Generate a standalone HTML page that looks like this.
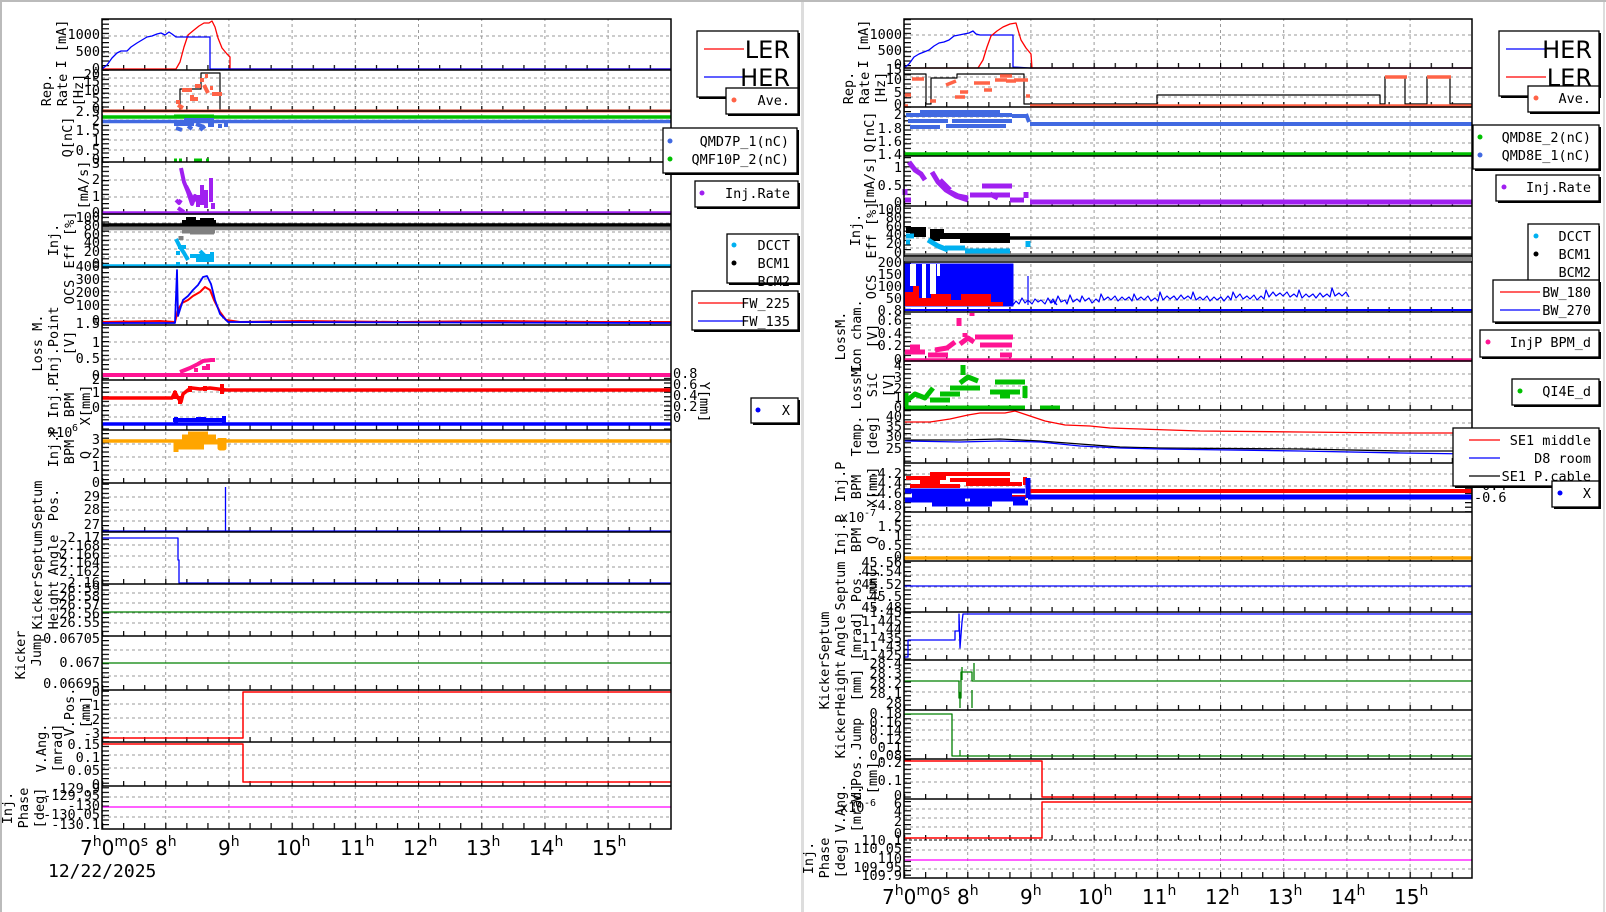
<!DOCTYPE html>
<html><head><meta charset="utf-8"><style>
html,body{margin:0;padding:0;background:#fff;width:1606px;height:912px;overflow:hidden}
svg{display:block}
.t{font-family:"DejaVu Sans Mono","Liberation Mono",monospace;font-size:13.5px;fill:#000}
.r{text-anchor:end}
.m{text-anchor:middle}
.h{font-family:"DejaVu Sans","Liberation Sans",sans-serif;font-size:20px;fill:#000}
.lg{font-family:"DejaVu Sans Mono","Liberation Mono",monospace;font-size:13.5px;fill:#000;text-anchor:end}
.big{font-family:"DejaVu Sans","Liberation Sans",sans-serif;font-size:24px;fill:#000;text-anchor:end}
</style></head><body>
<svg width="1606" height="912" viewBox="0 0 1606 912" xmlns="http://www.w3.org/2000/svg">
<defs>
<pattern id="vgL" x="165.2" y="0" width="63.2" height="6" patternUnits="userSpaceOnUse"><rect x="0" y="0" width="1" height="3" fill="#999"/></pattern>
<pattern id="vgR" x="967.2" y="0" width="63.2" height="6" patternUnits="userSpaceOnUse"><rect x="0" y="0" width="1" height="3" fill="#999"/></pattern>
<pattern id="txL" x="102" y="0" width="21.067" height="912" patternUnits="userSpaceOnUse"><rect x="0" y="0" width="1.2" height="912" fill="#000"/></pattern>
<pattern id="txR" x="904" y="0" width="21.067" height="912" patternUnits="userSpaceOnUse"><rect x="0" y="0" width="1.2" height="912" fill="#000"/></pattern>
<pattern id="ty" x="0" y="19" width="10" height="4.6" patternUnits="userSpaceOnUse"><rect x="0" y="0" width="10" height="1.2" fill="#000"/></pattern>
</defs>
<rect x="0" y="0" width="1606" height="2" fill="#bbb"/>
<rect x="0" y="0" width="2" height="912" fill="#bbb"/>
<rect x="801" y="2" width="3" height="910" fill="#ddd"/>
<rect x="1603" y="2" width="2" height="910" fill="#ddd"/>

<!-- ================= LEFT ================= -->
<rect x="102" y="19" width="569" height="810" fill="url(#vgL)"/>
<path stroke="#999" stroke-dasharray="3 3" stroke-width="1" fill="none" d="M102 36H671M102 53H671M102 78H671M102 86H671M102 94H671M102 102H671M102 120H671M102 130H671M102 140H671M102 150H671M102 180H671M102 197H671M102 223H671M102 232H671M102 240H671M102 249H671M102 257H671M102 279H671M102 292H671M102 305H671M102 318H671M102 342H671M102 359H671M102 392H671M102 405H671M102 417H671M102 444H671M102 457H671M102 470H671M102 497H671M102 510H671M102 521H671M102 545H671M102 556H671M102 567H671M102 593H671M102 603H671M102 613H671M102 623H671M102 650H671M102 663H671M102 676H671M102 704H671M102 718H671M102 732H671M102 755H671M102 768H671M102 797H671M102 807H671M102 817H671"/>
<g fill="url(#txL)">
<rect x="102" y="65" width="569" height="5"/><rect x="102" y="106" width="569" height="5"/><rect x="102" y="157" width="569" height="5"/><rect x="102" y="209" width="569" height="5"/><rect x="102" y="262" width="569" height="5"/><rect x="102" y="320" width="569" height="5"/><rect x="102" y="375" width="569" height="5"/><rect x="102" y="425" width="569" height="5"/><rect x="102" y="478" width="569" height="5"/><rect x="102" y="527" width="569" height="5"/><rect x="102" y="579" width="569" height="5"/><rect x="102" y="631" width="569" height="5"/><rect x="102" y="685" width="569" height="5"/><rect x="102" y="737" width="569" height="5"/><rect x="102" y="781" width="569" height="5"/><rect x="102" y="823" width="569" height="6"/>
</g>
<rect x="102" y="19" width="7" height="810" fill="url(#ty)"/>
<rect x="664" y="376" width="7" height="54" fill="url(#ty)"/>

<g fill="none" stroke-linejoin="round">
<polyline stroke="#f00" stroke-width="1.3" points="102,69 176,69 180,62 184,47 188,35 194,30 199,26 204,23 209,23 212,21 215,27 218,38 222,48 227,54 230,57 230,69 671,69"/>
<polyline stroke="#00f" stroke-width="1.3" points="102,69 107,65 112,58 117,53 121,51 127,51 131,47 137,43 142,40 147,37 152,36 157,34 161,33 165,35 169,32 172,34 176,37 210,37 210,69 671,69"/>
<polyline stroke="#000" stroke-width="1.2" points="102,110 180,110 180,89 201,89 201,73 220,73 220,110 671,110"/>
<line x1="102" y1="111" x2="671" y2="111" stroke="#ff6347" stroke-width="3"/>
<path stroke="#ff6347" stroke-width="4" d="M178 105l5 3M182 90h10M190 99h8M195 86h6M200 80h4M205 76h3M210 88h3M212 94h10M190 97l4 0M204 85l4 8M176 102h4"/>
<line x1="102" y1="117" x2="671" y2="117" stroke="#00c000" stroke-width="3.5"/>
<line x1="102" y1="121.5" x2="671" y2="121.5" stroke="#4169e1" stroke-width="3.5"/>
<path stroke="#4169e1" stroke-width="4" d="M174 124h20M176 128l6 2M188 126l4 3M196 124l8 3M200 130l5-4M208 125h6M220 124v4M226 121v6M184 120h30"/>
<path stroke="#00c000" stroke-width="3" d="M174 160h3M179 160h3M194 160h8M206 160h3M174 116h40"/>
<line x1="102" y1="213" x2="671" y2="213" stroke="#a020f0" stroke-width="3.5"/>
<path stroke="#a020f0" stroke-width="4" d="M181 168l3 14 4 10 4 12 3-8 3 6M202 185v20M198 195v12M206 190v18M211 178v24M213 203v6M176 200l3 3 2-3M186 186l8 16M178 208l6 4"/>
<line x1="102" y1="225" x2="671" y2="225" stroke="#000" stroke-width="3.5"/>
<line x1="102" y1="228.5" x2="671" y2="228.5" stroke="#808080" stroke-width="3.5"/>
<path stroke="#000" stroke-width="4" d="M182 222h34M186 219h10M200 220h14"/>
<path stroke="#808080" stroke-width="5" d="M182 231h33M181 236v4M190 232h24"/>
<line x1="102" y1="266" x2="671" y2="266" stroke="#00b0f0" stroke-width="3.5"/>
<path stroke="#00b0f0" stroke-width="4" d="M176 239l4 8 4 6 4 7M178 247h8M176 253l4 0M190 256h20M196 260h18M200 251l6 6M212 252v8M176 264h4"/>
<polyline stroke="#f00" stroke-width="2" points="102,322 160,321 175,322 178,310 182,303 188,300 193,296 200,292 205,287 210,290 214,300 220,312 226,320 240,322 300,321 400,322 500,321 600,322 671,322"/>
<polyline stroke="#00f" stroke-width="1.8" points="102,323 175,323 177,270 178,316 183,300 188,296 193,290 198,285 203,277 207,276 211,284 215,300 220,314 228,322 671,323"/>
<line x1="102" y1="375" x2="671" y2="375" stroke="#ff1493" stroke-width="4"/>
<path stroke="#ff1493" stroke-width="4" d="M180 372l10-4 8-4 5-3 8-1h4M196 368v4M204 366v4M208 364v6"/>
<polyline stroke="#f00" stroke-width="3.5" points="102,398 172,398 175,392 178,398 181,402 183,394 188,390 192,388 200,389 210,388 218,389 226,390 671,390"/>
<path stroke="#f00" stroke-width="4" d="M175 391v8M180 396v8M190 386v6M205 386v5M222 384v10"/>
<line x1="102" y1="424" x2="671" y2="424" stroke="#00f" stroke-width="3.5"/>
<path stroke="#00f" stroke-width="4" d="M173 420h50M176 417v6M196 419h10M224 416v8"/>
<line x1="102" y1="441" x2="671" y2="441" stroke="#ffa500" stroke-width="3.5"/>
<path stroke="#ffa500" stroke-width="5" d="M174 442h46M174 447h30M176 452v-10M182 437h34M188 434h20M220 438v10h4v-10"/>
<line x1="102" y1="531" x2="671" y2="531" stroke="#00f" stroke-width="1.3"/>
<line x1="225.5" y1="531" x2="225.5" y2="487" stroke="#00f" stroke-width="1.3"/>
<polyline stroke="#00f" stroke-width="1.3" points="102,538 178,538 178,560 179,560 179,583 671,583"/>
<line x1="102" y1="612" x2="671" y2="612" stroke="#008000" stroke-width="1.3"/>
<line x1="102" y1="663" x2="671" y2="663" stroke="#008000" stroke-width="1.3"/>
<polyline stroke="#f00" stroke-width="1.5" points="102,738 243,738 243,692 671,692"/>
<polyline stroke="#f00" stroke-width="1.5" points="102,744 243,744 243,782 671,782"/>
<line x1="102" y1="807" x2="671" y2="807" stroke="#f0f" stroke-width="1.3"/>
</g>
<g stroke="#000" stroke-width="1.5" fill="none">
<rect x="102" y="19" width="569" height="810"/>
<path d="M102 70H671M102 111H671M102 162H671M102 214H671M102 267H671M102 325H671M102 380H671M102 430H671M102 483H671M102 532H671M102 584H671M102 636H671M102 690H671M102 742H671M102 786H671"/>
</g>

<g class="t r">
<text x="100" y="39">1000</text><text x="100" y="56">500</text><text x="100" y="73">0</text>
<text x="100" y="79">20</text><text x="100" y="86">15</text><text x="100" y="95">10</text><text x="100" y="103">5</text><text x="100" y="113">0</text>
<text x="100" y="116">2.5</text><text x="100" y="125">2</text><text x="100" y="135">1.5</text><text x="100" y="145">1</text><text x="100" y="155">0.5</text><text x="100" y="164">0</text>
<text x="100" y="168">3</text><text x="100" y="184">2</text><text x="100" y="201">1</text><text x="100" y="217">0</text>
<text x="100" y="222">100</text><text x="100" y="230">80</text><text x="100" y="239">60</text><text x="100" y="247">40</text><text x="100" y="256">20</text><text x="100" y="268">0</text>
<text x="100" y="271">400</text><text x="100" y="284">300</text><text x="100" y="297">200</text><text x="100" y="310">100</text><text x="100" y="325">0</text>
<text x="100" y="328">1.5</text><text x="100" y="347">1</text><text x="100" y="363">0.5</text><text x="100" y="380">0</text>
<text x="100" y="384">2</text><text x="100" y="397">1</text><text x="100" y="412">0</text>
<text x="100" y="444">3</text><text x="100" y="458">2</text><text x="100" y="471">1</text><text x="100" y="487">0</text>
<text x="100" y="501">29</text><text x="100" y="514">28</text><text x="100" y="529">27</text>
<text x="100" y="542">2.17</text><text x="100" y="550">2.168</text><text x="100" y="559">2.166</text><text x="100" y="567">2.164</text><text x="100" y="576">2.162</text><text x="100" y="587">2.16</text>
<text x="100" y="593">26.59</text><text x="100" y="601">26.58</text><text x="100" y="609">26.57</text><text x="100" y="618">26.56</text><text x="100" y="627">26.55</text>
<text x="100" y="643">0.06705</text><text x="100" y="667">0.067</text><text x="100" y="688">0.06695</text>
<text x="100" y="696">0</text><text x="100" y="710">-1</text><text x="100" y="724">-2</text><text x="100" y="738">-3</text>
<text x="100" y="749">0.15</text><text x="100" y="762">0.1</text><text x="100" y="775">0.05</text><text x="100" y="789">0</text>
<text x="100" y="793">-129.9</text><text x="100" y="800">-129.95</text><text x="100" y="810">-130</text><text x="100" y="819">-130.05</text><text x="100" y="829">-130.1</text>
</g>
<g class="t"><text x="48" y="437">x10</text><text x="72" y="431" style="font-size:10px">6</text>
<text x="673" y="378">0.8</text><text x="673" y="389">0.6</text><text x="673" y="400">0.4</text><text x="673" y="411">0.2</text><text x="673" y="422">0</text>
<text transform="translate(700,402) rotate(90)" class="m">Y[mm]</text></g>
<g class="t m">
<text transform="translate(66,44) rotate(-90)">I [mA]</text>
<text transform="translate(51,90) rotate(-90)">Rep.</text><text transform="translate(67,90) rotate(-90)">Rate</text><text transform="translate(83,90) rotate(-90)">[Hz]</text>
<text transform="translate(72,137) rotate(-90)">Q[nC]</text>
<text transform="translate(88,185) rotate(-90)">[mA/s]</text>
<text transform="translate(58,240) rotate(-90)">Inj.</text><text transform="translate(74,240) rotate(-90)">Eff [%]</text>
<text transform="translate(74,292) rotate(-90)">OCS</text>
<text transform="translate(42,343) rotate(-90)">Loss M.</text><text transform="translate(58,343) rotate(-90)">Inj.Point</text><text transform="translate(74,343) rotate(-90)">[V]</text>
<text transform="translate(58,398) rotate(-90)">Inj.P</text><text transform="translate(74,405) rotate(-90)">BPM</text><text transform="translate(90,405) rotate(-90)">X[mm]</text>
<text transform="translate(58,447) rotate(-90)">Inj.P</text><text transform="translate(74,452) rotate(-90)">BPM</text><text transform="translate(90,455) rotate(-90)">Q</text>
<text transform="translate(42,505) rotate(-90)">Septum</text><text transform="translate(58,505) rotate(-90)">Pos.</text>
<text transform="translate(42,555) rotate(-90)">Septum</text><text transform="translate(58,555) rotate(-90)">Angle</text>
<text transform="translate(42,605) rotate(-90)">Kicker</text><text transform="translate(58,605) rotate(-90)">Height</text>
<text transform="translate(25,655) rotate(-90)">Kicker</text><text transform="translate(41,650) rotate(-90)">Jump</text>
<text transform="translate(74,712) rotate(-90)">V.Pos.</text><text transform="translate(90,712) rotate(-90)">[mm]</text>
<text transform="translate(46,748) rotate(-90)">V.Ang.</text><text transform="translate(62,748) rotate(-90)">[mrad]</text>
<text transform="translate(12,808) rotate(-90)">Inj.</text><text transform="translate(28,808) rotate(-90)">Phase</text><text transform="translate(44,808) rotate(-90)">[deg]</text>
</g>
<g class="h">
<text x="80" y="855">7<tspan dy="-9" font-size="14">h</tspan><tspan dy="9">0</tspan><tspan dy="-9" font-size="14">m</tspan><tspan dy="9">0</tspan><tspan dy="-9" font-size="14">s</tspan></text>
<text x="155" y="855">8<tspan dy="-9" font-size="14">h</tspan></text>
<text x="218" y="855">9<tspan dy="-9" font-size="14">h</tspan></text>
<text x="276" y="855">10<tspan dy="-9" font-size="14">h</tspan></text>
<text x="340" y="855">11<tspan dy="-9" font-size="14">h</tspan></text>
<text x="403" y="855">12<tspan dy="-9" font-size="14">h</tspan></text>
<text x="466" y="855">13<tspan dy="-9" font-size="14">h</tspan></text>
<text x="529" y="855">14<tspan dy="-9" font-size="14">h</tspan></text>
<text x="592" y="855">15<tspan dy="-9" font-size="14">h</tspan></text>
<text x="48" y="877" style="font-family:'DejaVu Sans Mono',monospace;font-size:18px">12/22/2025</text>
</g>

<g stroke="#000" fill="#fff" stroke-width="1.3">
<rect x="699" y="33" width="101" height="66" fill="#000" stroke="none"/><rect x="697" y="31" width="101" height="66"/>
<rect x="728" y="90" width="72" height="26" fill="#000" stroke="none"/><rect x="726" y="88" width="72" height="26"/>
<rect x="665" y="130" width="134" height="45" fill="#000" stroke="none"/><rect x="663" y="128" width="134" height="45"/>
<rect x="697" y="183" width="103" height="26" fill="#000" stroke="none"/><rect x="695" y="181" width="103" height="26"/>
<rect x="729" y="236" width="71" height="49" fill="#000" stroke="none"/><rect x="727" y="234" width="71" height="49"/>
<rect x="694" y="293" width="106" height="39" fill="#000" stroke="none"/><rect x="692" y="291" width="106" height="39"/>
<rect x="753" y="400" width="47" height="25" fill="#000" stroke="none"/><rect x="751" y="398" width="47" height="25"/>
</g>
<line x1="704" y1="49" x2="744" y2="49" stroke="#f00" stroke-width="1.2"/><text class="big" x="790" y="58">LER</text>
<line x1="704" y1="77" x2="744" y2="77" stroke="#00f" stroke-width="1.2"/><text class="big" x="790" y="86">HER</text>
<circle cx="734" cy="100" r="2.5" fill="#ff6347"/><text class="lg" x="790" y="105">Ave.</text>
<circle cx="670" cy="141" r="2.5" fill="#4169e1"/><text class="lg" x="789" y="146">QMD7P_1(nC)</text>
<circle cx="670" cy="159" r="2.5" fill="#00c000"/><text class="lg" x="789" y="164">QMF10P_2(nC)</text>
<circle cx="702" cy="193" r="2.5" fill="#a020f0"/><text class="lg" x="790" y="198">Inj.Rate</text>
<circle cx="734" cy="245" r="2.5" fill="#00b0f0"/><text class="lg" x="790" y="250">DCCT</text>
<circle cx="734" cy="263" r="2.5" fill="#000"/><text class="lg" x="790" y="268">BCM1</text>
<text class="lg" x="790" y="286">BCM2</text>
<line x1="698" y1="303" x2="746" y2="303" stroke="#f00" stroke-width="1.2"/><text class="lg" x="790" y="308">FW_225</text>
<line x1="698" y1="321" x2="746" y2="321" stroke="#00f" stroke-width="1.2"/><text class="lg" x="790" y="326">FW_135</text>
<circle cx="758" cy="410" r="2.5" fill="#00f"/><text class="lg" x="790" y="415">X</text>

<!-- ================= RIGHT ================= -->
<rect x="904" y="19" width="568" height="859" fill="url(#vgR)"/>
<path stroke="#999" stroke-dasharray="3 3" stroke-width="1" fill="none" d="M904 35H1472M904 51H1472M904 77H1472M904 87H1472M904 97H1472M904 117H1472M904 130H1472M904 143H1472M904 168H1472M904 186H1472M904 218H1472M904 228H1472M904 238H1472M904 248H1472M904 275H1472M904 288H1472M904 300H1472M904 325H1472M904 338H1472M904 350H1472M904 374H1472M904 386H1472M904 398H1472M904 423H1472M904 435H1472M904 448H1472M904 474H1472M904 486H1472M904 498H1472M904 525H1472M904 537H1472M904 549H1472M904 575H1472M904 587H1472M904 599H1472M904 622H1472M904 631H1472M904 640H1472M904 649H1472M904 670H1472M904 681H1472M904 692H1472M904 720H1472M904 730H1472M904 740H1472M904 769H1472M904 782H1472M904 809H1472M904 818H1472M904 827H1472M904 850H1472M904 860H1472M904 869H1472"/>
<g fill="url(#txR)">
<rect x="904" y="63" width="568" height="5"/><rect x="904" y="102" width="568" height="5"/><rect x="904" y="151" width="568" height="5"/><rect x="904" y="201" width="568" height="5"/><rect x="904" y="251" width="568" height="5"/><rect x="904" y="307" width="568" height="5"/><rect x="904" y="356" width="568" height="5"/><rect x="904" y="405" width="568" height="5"/><rect x="904" y="458" width="568" height="5"/><rect x="904" y="507" width="568" height="5"/><rect x="904" y="556" width="568" height="5"/><rect x="904" y="607" width="568" height="5"/><rect x="904" y="655" width="568" height="5"/><rect x="904" y="705" width="568" height="5"/><rect x="904" y="754" width="568" height="5"/><rect x="904" y="794" width="568" height="5"/><rect x="904" y="835" width="568" height="5"/><rect x="904" y="872" width="568" height="6"/>
</g>
<rect x="904" y="19" width="7" height="859" fill="url(#ty)"/>
<rect x="1465" y="463" width="7" height="49" fill="url(#ty)"/>

<g fill="none" stroke-linejoin="round">
<polyline stroke="#00f" stroke-width="1.3" points="904,68 909,64 914,57 919,54 924,52 929,50 934,46 939,43 944,42 949,40 954,36 959,35 964,34 969,33 973,31 976,34 980,35 1013,35 1013,67 1030,68 1472,68"/>
<polyline stroke="#f00" stroke-width="1.3" points="904,68 978,68 983,60 987,47 991,36 997,31 1003,27 1010,24 1016,23 1018,30 1021,40 1026,48 1031,54 1032,68 1472,68"/>
<polyline stroke="#000" stroke-width="1.2" points="904,74 926,74 926,104 931,104 931,78 957,78 957,74 1024,74 1024,104 1157,104 1157,95 1380,95 1380,104 1385,104 1385,77 1405,77 1405,104 1427,104 1427,77 1450,77 1450,104 1472,104"/>
<line x1="1030" y1="106" x2="1472" y2="106" stroke="#ff6347" stroke-width="3.5"/>
<path stroke="#ff6347" stroke-width="3.5" d="M1385 77h22M1427 77h24M904 106h4M905 95h6M912 79h12M930 101h6M946 85l10-4M960 92h8M974 83h16M984 90h8M995 80h12M1000 76h12M1006 81h10M1014 80h14M955 97h10M1026 96h4"/>
<path stroke="#4169e1" stroke-width="4" d="M906 115h106M908 121h40M952 121h60M910 127h30M946 126h60M920 112h80M1012 116h14M1026 114l3 8M1030 124h442"/>
<line x1="904" y1="154" x2="1472" y2="154" stroke="#00c000" stroke-width="3.5"/>
<path stroke="#a020f0" stroke-width="5" d="M909 162l6 8 6 4 4 6M905 189v6M905 200h6M932 172l6 10 8 8 10 6 12 4M940 180l10 10M950 192l8 4 10 2M970 195h40M982 186h30M990 194l8 4M1010 200h14M1026 192v6M1030 202h442"/>
<line x1="904" y1="255" x2="1472" y2="255" stroke="#808080" stroke-width="3.5"/>
<line x1="1010" y1="238" x2="1472" y2="238" stroke="#000" stroke-width="3.5"/>
<path stroke="#000" stroke-width="6" d="M906 230h20M910 234h16M930 232h14M940 236h70M960 240h50M930 238h10"/>
<path stroke="#00b0f0" stroke-width="5" d="M906 236h8M906 242h4M928 240l10 6 10 4M945 248h20M965 251h45M1028 241v6"/>
<path stroke="#00f" stroke-width="1" fill="#00f" d="M905 264H1013V306H905Z"/>
<path fill="#fff" stroke="none" d="M910 264h6v22h-6zM922 264h4v40h-4zM930 264h6v30h-6zM937 264h3v12h-3z"/>
<path fill="#f00" d="M905 292h8v-6h6v12h12v-4h20v6h10v-6h30v8h12V306H905Z"/>
<path stroke="#00f" stroke-width="1.2" d="M1013 305l3-4 3 3 3-6 3 5 3-3 4 4 3-5 3 3 3-2 4 4 3-6 3 5 3-2 3 4M1028 305V276M1050 303l3-4 2 5 3-8 3 6 4-2 2 4 3-9 3 7 4-3 3 3 2-6 3 5 4-3 3 5 4-4 3 3 2-8 3 6 4-3 3 3 4-4 3 5 4-4 3 3 4-3 3 4 2-7 3 6 4-3 3 3 4-4 3 5 4-3 3 3 2-9 3 8 4-4 3 3 4-3 3 4 4-5 3 4 4-3 3 3 2-7 3 8 4-3 3 3 4-4 3 5 4-4 3 3 4-3 3 4 4-5 3 4 2-8 3 6 4-4 3 5 4-3 3 3 4-4 3 5 4-4 3 3 2-9 3 7 4-5 3 4 4-3 3 3 4-4 3 5 4-3 3 3 2-7 3 8 4-4 3 3 4-3 3 4 4-5 3 4 4-3 3 3 2-9 3 8 4-3 3 3 4-4 3 5"/>
<line x1="904" y1="310" x2="1472" y2="310" stroke="#00f" stroke-width="2"/>
<line x1="904" y1="360" x2="1472" y2="360" stroke="#ff1493" stroke-width="3.5"/>
<path stroke="#ff1493" stroke-width="5" d="M905 352h20M910 347h10M928 355h20M935 350l12 -2 8-6M960 344l8-6 6 4M975 337h38M980 345h32M959 318v8M972 313v3M965 333v4M1000 355h12"/>
<path stroke="#00c000" stroke-width="5" d="M905 402l10-8 10 4 8-10M906 393v14M930 400h20M940 394h20M950 388h30M960 383l8-6 10 4M963 375v-10M990 392h30M995 382h30M1000 396h10M1025 398v-12M905 408h120M1040 408h20"/>
<polyline stroke="#f00" stroke-width="1.3" points="905,422 930,422 950,419 968,415 980,413 1005,413 1015,411 1030,416 1045,421 1065,425 1090,426 1110,428 1140,429 1200,431 1300,432 1400,433 1472,433"/>
<polyline stroke="#000" stroke-width="1.3" points="905,440 960,440 1000,439 1040,441 1080,444 1120,447 1160,448 1300,449 1400,451 1472,451"/>
<polyline stroke="#00f" stroke-width="1.3" points="905,441 960,442 1000,441 1040,442 1080,446 1120,448 1160,449 1300,451 1400,453 1472,454"/>
<path stroke="#f00" stroke-width="4" d="M906 478h40M950 480h60M910 486h50M966 484h56M920 482h20M930 474h80M1030 491h442M1008 497h18M1025 477v8"/>
<path stroke="#00f" stroke-width="5" d="M905 491h120M905 500h60M970 499h55M912 496h100M1013 503h15M1028 497h444M1028 478v20M932 504h60"/>
<line x1="904" y1="558" x2="1472" y2="558" stroke="#ffa500" stroke-width="3.5"/>
<line x1="904" y1="586" x2="1472" y2="586" stroke="#00f" stroke-width="1.3"/>
<polyline stroke="#00f" stroke-width="1.3" points="904,657 908,657 908,640 955,640 955,631 959,631 959,614 960,648 962,622 963,614 1472,614"/>
<polyline stroke="#008000" stroke-width="1.3" points="904,681 959,681 959,698 961,698 961,672 972,672 972,681 1472,681"/>
<path stroke="#008000" stroke-width="1.3" d="M960 708V692M962 667V680M972 708V690M974 663V680"/>
<polyline stroke="#008000" stroke-width="1.3" points="904,714 952,714 952,756 1472,756"/>
<line x1="960" y1="756" x2="960" y2="750" stroke="#008000" stroke-width="1.2"/>
<polyline stroke="#f00" stroke-width="1.5" points="904,761 1042,761 1042,797 1472,797"/>
<polyline stroke="#f00" stroke-width="1.5" points="904,838 1042,838 1042,802 1472,802"/>
<line x1="904" y1="840" x2="1472" y2="840" stroke="#000" stroke-width="1" stroke-dasharray="3 2"/>
<line x1="904" y1="860" x2="1472" y2="860" stroke="#f0f" stroke-width="1.3"/>
</g>
<g stroke="#000" stroke-width="1.5" fill="none">
<rect x="904" y="19" width="568" height="859"/>
<path d="M904 68H1472M904 107H1472M904 156H1472M904 206H1472M904 256H1472M904 262H1472M904 312H1472M904 361H1472M904 410H1472M904 463H1472M904 512H1472M904 561H1472M904 612H1472M904 660H1472M904 710H1472M904 759H1472M904 799H1472"/>
</g>
<rect x="904" y="257" width="568" height="4" fill="#808080"/>

<g class="t r">
<text x="902" y="39">1000</text><text x="902" y="55">500</text><text x="902" y="69">0</text><text x="902" y="74">15</text>
<text x="902" y="84">10</text><text x="902" y="97">5</text><text x="902" y="109">0</text>
<text x="902" y="119">2</text><text x="902" y="133">1.8</text><text x="902" y="146">1.6</text><text x="902" y="159">1.4</text>
<text x="902" y="172">1</text><text x="902" y="190">0.5</text><text x="902" y="207">0</text>
<text x="902" y="214">100</text><text x="902" y="222">80</text><text x="902" y="231">60</text><text x="902" y="239">40</text><text x="902" y="248">20</text><text x="902" y="257">0</text>
<text x="902" y="267">200</text><text x="902" y="279">150</text><text x="902" y="291">100</text><text x="902" y="303">50</text><text x="902" y="315">0.8</text>
<text x="902" y="325">0.6</text><text x="902" y="338">0.4</text><text x="902" y="350">0.2</text><text x="902" y="364">0</text>
<text x="902" y="370">4</text><text x="902" y="382">3</text><text x="902" y="393">2</text><text x="902" y="402">1</text><text x="902" y="412">0</text>
<text x="902" y="421">40</text><text x="902" y="431">35</text><text x="902" y="441">30</text><text x="902" y="453">25</text>
<text x="902" y="478">-4.2</text><text x="902" y="488">-4.4</text><text x="902" y="498">-4.6</text><text x="902" y="510">-4.8</text>
<text x="902" y="521">2</text><text x="902" y="531">1.5</text><text x="902" y="541">1</text><text x="902" y="550">0.5</text><text x="902" y="561">0</text>
<text x="902" y="567">45.56</text><text x="902" y="576">45.54</text><text x="902" y="589">45.52</text><text x="902" y="601">45.5</text><text x="902" y="612">45.48</text>
<text x="902" y="617">1.45</text><text x="902" y="626">1.445</text><text x="902" y="634">1.44</text><text x="902" y="643">1.435</text><text x="902" y="651">1.43</text><text x="902" y="660">1.425</text>
<text x="902" y="668">28.4</text><text x="902" y="678">28.3</text><text x="902" y="688">28.2</text><text x="902" y="698">28.1</text><text x="902" y="708">28</text>
<text x="902" y="718">0.18</text><text x="902" y="727">0.16</text><text x="902" y="735">0.14</text><text x="902" y="744">0.12</text><text x="902" y="752">0.1</text><text x="902" y="760">0.08</text>
<text x="902" y="767">0.2</text><text x="902" y="785">0.1</text><text x="902" y="800">0</text>
<text x="902" y="808">6</text><text x="902" y="816">4</text><text x="902" y="826">2</text><text x="902" y="838">0</text>
<text x="902" y="845">110.1</text><text x="902" y="853">110.05</text><text x="902" y="863">110</text><text x="902" y="872">109.95</text><text x="902" y="880">109.9</text>
</g>
<g class="t"><text x="1474" y="466">0</text><text x="1474" y="478">-0.2</text><text x="1474" y="490">-0.4</text><text x="1474" y="502">-0.6</text>
<text x="840" y="522">x10</text><text x="864" y="516" style="font-size:10px">-7</text><text x="840" y="812">x10</text><text x="864" y="806" style="font-size:10px">-6</text></g>
<g class="t m">
<text transform="translate(868,44) rotate(-90)">I [mA]</text>
<text transform="translate(853,88) rotate(-90)">Rep.</text><text transform="translate(869,88) rotate(-90)">Rate</text><text transform="translate(885,88) rotate(-90)">[Hz]</text>
<text transform="translate(874,132) rotate(-90)">Q[nC]</text>
<text transform="translate(874,181) rotate(-90)">[mA/s]</text>
<text transform="translate(860,230) rotate(-90)">Inj.</text><text transform="translate(876,230) rotate(-90)">Eff [%]</text>
<text transform="translate(876,287) rotate(-90)">OCS</text>
<text transform="translate(845,336) rotate(-90)">LossM.</text><text transform="translate(861,336) rotate(-90)">Ion cham.</text><text transform="translate(877,336) rotate(-90)">[V]</text>
<text transform="translate(861,385) rotate(-90)">LossM.</text><text transform="translate(877,385) rotate(-90)">SiC</text><text transform="translate(893,385) rotate(-90)">[V]</text>
<text transform="translate(861,436) rotate(-90)">Temp.</text><text transform="translate(877,436) rotate(-90)">[deg]</text>
<text transform="translate(845,482) rotate(-90)">Inj.P</text><text transform="translate(861,487) rotate(-90)">BPM</text><text transform="translate(877,487) rotate(-90)">X[mm]</text>
<text transform="translate(845,535) rotate(-90)">Inj.P</text><text transform="translate(861,540) rotate(-90)">BPM</text><text transform="translate(877,540) rotate(-90)">Q</text>
<text transform="translate(845,586) rotate(-90)">Septum</text><text transform="translate(861,586) rotate(-90)">Pos.</text><text transform="translate(877,586) rotate(-90)">[mm]</text>
<text transform="translate(829,636) rotate(-90)">Septum</text><text transform="translate(845,636) rotate(-90)">Angle</text><text transform="translate(861,636) rotate(-90)">[mrad]</text>
<text transform="translate(829,685) rotate(-90)">Kicker</text><text transform="translate(845,685) rotate(-90)">Height</text><text transform="translate(861,685) rotate(-90)">[mm]</text>
<text transform="translate(845,734) rotate(-90)">Kicker</text><text transform="translate(861,734) rotate(-90)">Jump</text>
<text transform="translate(861,778) rotate(-90)">V.Pos.</text><text transform="translate(877,778) rotate(-90)">[mm]</text>
<text transform="translate(845,808) rotate(-90)">V.Ang.</text><text transform="translate(861,808) rotate(-90)">[mrad]</text>
<text transform="translate(813,858) rotate(-90)">Inj.</text><text transform="translate(829,858) rotate(-90)">Phase</text><text transform="translate(845,858) rotate(-90)">[deg]</text>
</g>
<g class="h">
<text x="882" y="904">7<tspan dy="-9" font-size="14">h</tspan><tspan dy="9">0</tspan><tspan dy="-9" font-size="14">m</tspan><tspan dy="9">0</tspan><tspan dy="-9" font-size="14">s</tspan></text>
<text x="957" y="904">8<tspan dy="-9" font-size="14">h</tspan></text>
<text x="1020" y="904">9<tspan dy="-9" font-size="14">h</tspan></text>
<text x="1078" y="904">10<tspan dy="-9" font-size="14">h</tspan></text>
<text x="1142" y="904">11<tspan dy="-9" font-size="14">h</tspan></text>
<text x="1205" y="904">12<tspan dy="-9" font-size="14">h</tspan></text>
<text x="1268" y="904">13<tspan dy="-9" font-size="14">h</tspan></text>
<text x="1331" y="904">14<tspan dy="-9" font-size="14">h</tspan></text>
<text x="1394" y="904">15<tspan dy="-9" font-size="14">h</tspan></text>
</g>

<g stroke="#000" fill="#fff" stroke-width="1.3">
<rect x="1501" y="33" width="100" height="65" fill="#000" stroke="none"/><rect x="1499" y="31" width="100" height="65"/>
<rect x="1530" y="88" width="70" height="26" fill="#000" stroke="none"/><rect x="1528" y="86" width="71" height="26"/>
<rect x="1475" y="127" width="126" height="44" fill="#000" stroke="none"/><rect x="1473" y="125" width="126" height="44"/>
<rect x="1498" y="177" width="103" height="26" fill="#000" stroke="none"/><rect x="1496" y="175" width="103" height="26"/>
<rect x="1530" y="226" width="70" height="62" fill="#000" stroke="none"/><rect x="1528" y="224" width="71" height="62"/>
<rect x="1495" y="282" width="106" height="42" fill="#000" stroke="none"/><rect x="1493" y="280" width="106" height="42"/>
<rect x="1482" y="332" width="119" height="27" fill="#000" stroke="none"/><rect x="1480" y="330" width="119" height="27"/>
<rect x="1514" y="381" width="87" height="26" fill="#000" stroke="none"/><rect x="1512" y="379" width="87" height="26"/>
<rect x="1455" y="430" width="146" height="58" fill="#000" stroke="none"/><rect x="1453" y="428" width="146" height="58"/>
<rect x="1554" y="483" width="47" height="26" fill="#000" stroke="none"/><rect x="1552" y="481" width="47" height="26"/>
</g>
<line x1="1506" y1="49" x2="1546" y2="49" stroke="#00f" stroke-width="1.2"/><text class="big" x="1592" y="58">HER</text>
<line x1="1506" y1="77" x2="1546" y2="77" stroke="#f00" stroke-width="1.2"/><text class="big" x="1592" y="86">LER</text>
<circle cx="1536" cy="98" r="2.5" fill="#ff6347"/><text class="lg" x="1591" y="103">Ave.</text>
<circle cx="1480" cy="137" r="2.5" fill="#00c000"/><text class="lg" x="1591" y="142">QMD8E_2(nC)</text>
<circle cx="1480" cy="155" r="2.5" fill="#4169e1"/><text class="lg" x="1591" y="160">QMD8E_1(nC)</text>
<circle cx="1504" cy="187" r="2.5" fill="#a020f0"/><text class="lg" x="1591" y="192">Inj.Rate</text>
<circle cx="1536" cy="236" r="2.5" fill="#00b0f0"/><text class="lg" x="1591" y="241">DCCT</text>
<circle cx="1536" cy="254" r="2.5" fill="#000"/><text class="lg" x="1591" y="259">BCM1</text>
<text class="lg" x="1591" y="277">BCM2</text>
<line x1="1500" y1="292" x2="1540" y2="292" stroke="#f00" stroke-width="1.2"/><text class="lg" x="1591" y="297">BW_180</text>
<line x1="1500" y1="310" x2="1540" y2="310" stroke="#00f" stroke-width="1.2"/><text class="lg" x="1591" y="315">BW_270</text>
<circle cx="1488" cy="342" r="2.5" fill="#ff1493"/><text class="lg" x="1591" y="347">InjP BPM_d</text>
<circle cx="1520" cy="391" r="2.5" fill="#00c000"/><text class="lg" x="1591" y="396">QI4E_d</text>
<line x1="1469" y1="440" x2="1500" y2="440" stroke="#f00" stroke-width="1.2"/><text class="lg" x="1591" y="445">SE1 middle</text>
<line x1="1469" y1="458" x2="1500" y2="458" stroke="#00f" stroke-width="1.2"/><text class="lg" x="1591" y="463">D8 room</text>
<line x1="1469" y1="476" x2="1500" y2="476" stroke="#000" stroke-width="1.2"/><text class="lg" x="1591" y="481">SE1 P.cable</text>
<circle cx="1560" cy="493" r="2.5" fill="#00f"/><text class="lg" x="1591" y="498">X</text>
</svg>
</body></html>
